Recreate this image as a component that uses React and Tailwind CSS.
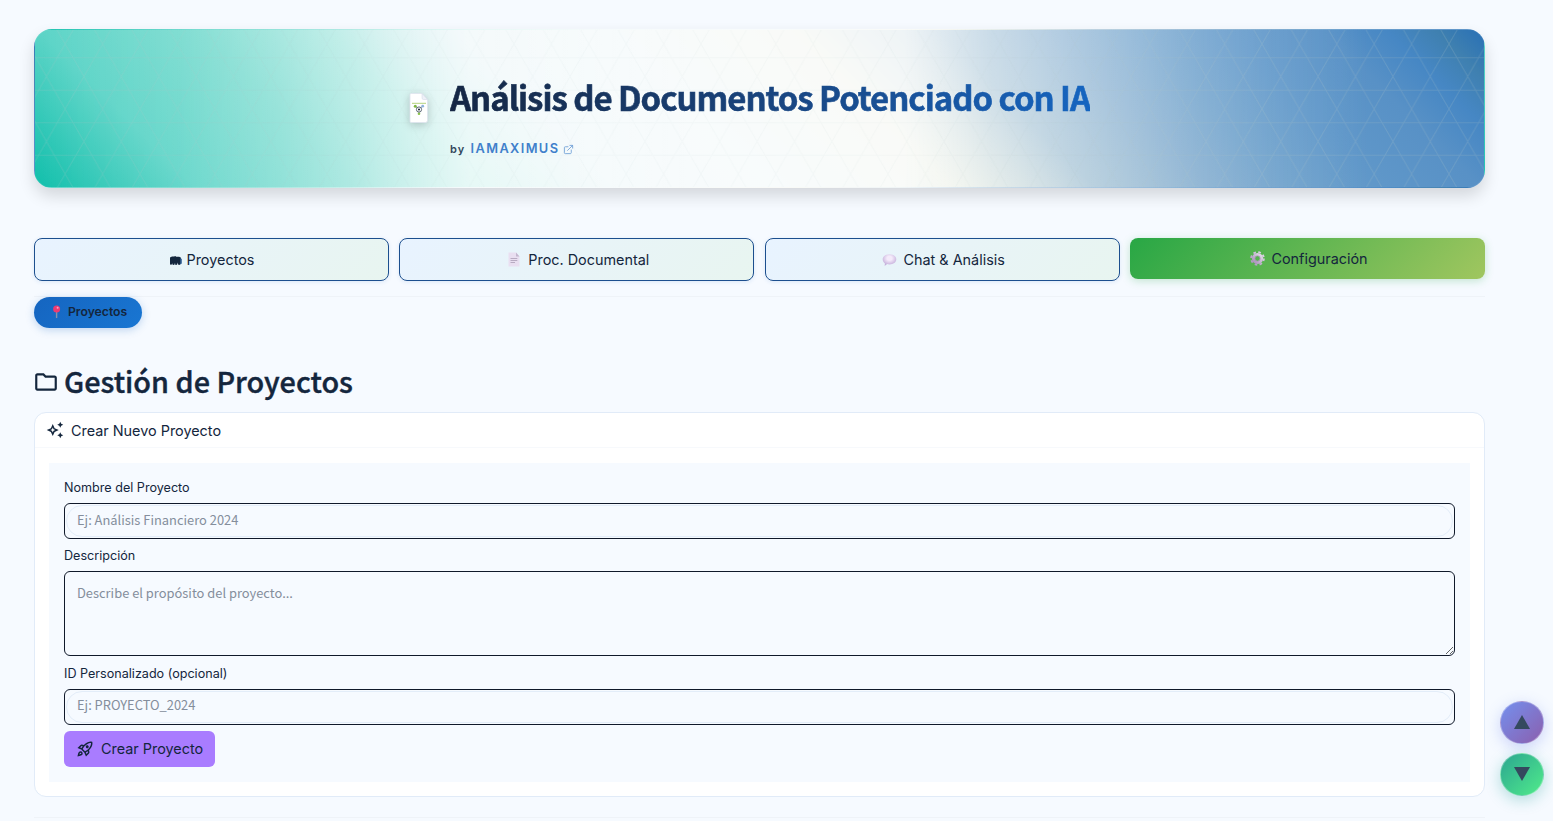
import { MdOutlineAutoAwesome, MdOutlineFolder, MdOutlineRocketLaunch } from "react-icons/md";
import { FiExternalLink } from "react-icons/fi";

const displayFont = "font-['Noto_Sans_CJK_SC',sans-serif]";

function BoxIcon() {
  return (
    <svg width="13" height="14" viewBox="0 0 13 14" className="-mr-px">
      <path d="M1 4.5L3 3.6h2.2l1-.6 1 .8h3l1.8 1v5.6L10.5 12 9 11.6V9.5L8 11.8l-1.6.1-.4-2-.8 2.1-1.6-.3-.4-1.4-.6 1.5L1 11.4z" fill="#14263d" />
      <path d="M11.2 5l1.6.9v4.5l-1.6 1.1z" fill="#2e5d94" />
    </svg>
  );
}

function PageIcon() {
  return (
    <svg width="12" height="15" viewBox="0 0 12 15" className="ml-[4px] mr-[2px]">
      <path d="M.5.5H8l3.5 4v10H.5z" fill="#e9dff1" />
      <path d="M8 .5l3.5 4H8z" fill="#c4b7cf" />
      <path d="M2.5 6.5h6.8M2.5 8.5h6.8M2.5 10.5h4.5" stroke="#b8abc2" />
    </svg>
  );
}

function ChatIcon() {
  return (
    <svg width="15" height="14" viewBox="0 0 15 14" className="ml-[3px]">
      <defs>
        <radialGradient id="bubble" cx="50%" cy="35%" r="60%">
          <stop offset="0.3" stopColor="#f4eafa" />
          <stop offset="1" stopColor="#c4aeda" />
        </radialGradient>
      </defs>
      <path d="M7.5 1.2c3.9 0 6.8 2.2 6.8 5s-3 5.2-6.8 5.2c-.8 0-1.8-.1-2.5-.3-.5.9-1.4 1.5-2.5 1.7.4-.8.5-1.7.3-2.6C1.5 9.2.7 7.9.7 6.2c0-2.800 2.900-5 6.800-5z" fill="url(#bubble)" />
    </svg>
  );
}

function GearIcon() {
  return (
    <svg width="15" height="15" viewBox="0 0 15 15" className="ml-[3px]">
      <defs>
        <linearGradient id="gear" x1="0" y1="1" x2="1" y2="0">
          <stop offset="0" stopColor="#a98fbb" />
          <stop offset="1" stopColor="#e3dcea" />
        </linearGradient>
      </defs>
      <circle cx="7.5" cy="7.5" r="6.4" fill="none" stroke="url(#gear)" strokeWidth="1.8" strokeDasharray="2.6 2.43" />
      <circle cx="7.5" cy="7.5" r="4" fill="none" stroke="url(#gear)" strokeWidth="3.2" />
      <circle cx="7.5" cy="7.5" r="2.7" fill="none" stroke="#9c8fa8" strokeWidth=".6" />
    </svg>
  );
}

function PinIcon() {
  return (
    <svg width="9" height="14" viewBox="0 0 9 14">
      <path d="M3.9 6h1.4v6.2l-.7 1-.7-1z" fill="#8a8fa8" />
      <circle cx="4.6" cy="4" r="3.5" fill="#ee3a72" />
      <circle cx="5.6" cy="2.8" r="1" fill="#ff9dbb" />
    </svg>
  );
}

function LogoIcon() {
  return (
    <svg width="20" height="30" viewBox="0 0 20 30" className="drop-shadow-[0_2px_4px_rgba(0,0,0,0.2)]">
      <path d="M2.500.5H13l5.500 6v21a2 2 0 0 1-2 2h-14a1.500 1.500 0 0 1-1.500-2v-25a1.500 1.500 0 0 1 1.500-2z" fill="#fff" stroke="#dde3ee" strokeWidth=".8" />
      <path d="M13 .5v4.5q0 1.500 1.500 1.500h4z" fill="#eef1f8" stroke="#cfd6e4" strokeWidth=".5" />
      <path d="M3 10.300h14" stroke="#b4d27c" />
      <path d="M6.500 13.500l3.500 3 3.500-3M10 17v4" stroke="#8b98a8" strokeWidth=".7" fill="none" />
      <circle cx="6.3" cy="13.2" r="1.5" fill="#7cb342" />
      <circle cx="13.7" cy="13.2" r="1.4" fill="#8fb2dc" />
      <circle cx="10" cy="20.7" r="1.3" fill="#8bc34a" />
      <circle cx="10" cy="16.5" r="2.6" fill="#fff" stroke="#4c5866" strokeWidth=".9" />
      <circle cx="10" cy="16.5" r="1" fill="#111a26" />
    </svg>
  );
}

// lines fade out towards the middle of the banner
function TrianglePattern() {
  return (
    <svg className="pointer-events-none absolute inset-0 h-full w-full [mask-image:linear-gradient(90deg,#000_0%,rgba(0,0,0,0.35)_25%,rgba(0,0,0,0.4)_65%,#000_85%)]">
      <defs>
        <pattern id="triangles" x="30.2" y="14" width="37.4" height="65" patternUnits="userSpaceOnUse">
          <path d="M0 0L37.4 65M37.4 0L0 65M0 13.8h37.4M0 46.3h37.4" stroke="#b4c8c8" strokeOpacity="0.2" strokeWidth="1" fill="none" />
        </pattern>
      </defs>
      <rect width="100%" height="100%" fill="url(#triangles)" />
    </svg>
  );
}

const tabs = [
  { label: "Proyectos", icon: BoxIcon },
  { label: "Proc. Documental", icon: PageIcon },
  { label: "Chat & Análisis", icon: ChatIcon },
  { label: "Configuración", icon: GearIcon, active: true },
];

function Banner() {
  return (
    <header className="relative h-[159px] overflow-hidden rounded-[18px] border border-white/5 bg-[linear-gradient(90deg,rgba(255,255,255,0)_0%,rgba(255,255,255,0.1)_10%,rgba(255,255,255,0.26)_17%,rgba(255,255,255,0.42)_22%,rgba(255,255,255,0.6)_26%,rgba(255,255,255,0.77)_30%,rgba(255,255,255,0.82)_45%,rgba(255,255,255,0.82)_60%,rgba(255,255,255,0.56)_66%,rgba(255,255,255,0.33)_75%,rgba(255,255,255,0.2)_80%,rgba(255,255,255,0.1)_85%,rgba(255,255,255,0)_92%),linear-gradient(45deg,#10bfab_0%,#5cd4c7_10%,#76dace_20%,#98e3da_28%,#d0e9ef_36%,#d8ecee_46%,#dde5d5_57%,#8fb4cb_66%,#79a6cb_73%,#6b9fca_78%,#5f97c9_84%,#5891c6_90%,#4687c4_94%,#3f80b0_97%,#2870b6_100%)] shadow-[0_8px_16px_rgba(0,0,0,0.14)]">
      <TrianglePattern />
      <div className="relative flex pl-[374px] pt-[44px]">
        <div className="pt-[19px]">
          <LogoIcon />
        </div>
        <div className="ml-[21px]">
          <h1 className={`${displayFont} w-fit whitespace-nowrap bg-linear-to-r from-[#152744] to-[#1565c0] bg-clip-text text-[33px] font-bold leading-[46px] tracking-[-1.03px] text-transparent [-webkit-text-stroke:0.6px_transparent]`}>
            Análisis de Documentos Potenciado con IA
          </h1>
          <div className="mt-[20px] flex items-center text-[11px] font-semibold leading-4 tracking-[1.2px] text-[#33475b]">
            by
            <a className="ml-[5px] flex items-center pt-px text-[12.8px] font-semibold tracking-[1.4px] text-[#3f80cb]">
              IAMAXIMUS
              <FiExternalLink className="ml-1 size-[11px] opacity-70" />
            </a>
          </div>
        </div>
      </div>
    </header>
  );
}

function Tab({ label, icon: Icon, active }) {
  if (active) {
    return (
      <button className="flex h-[41px] items-center justify-center gap-1.5 rounded-lg bg-[linear-gradient(135deg,#28a745,#a0c65f)] text-[14.4px] shadow-[0_2px_8px_rgba(40,167,69,0.25)]">
        <Icon />
        {label}
      </button>
    );
  }
  return (
    <button className="flex h-[43px] items-center justify-center gap-1.5 rounded-lg border border-[#1c4f8e] bg-[linear-gradient(135deg,#e8f3ff,#e8f5f0)] text-[14.4px] shadow-[0_1px_4px_rgba(21,101,192,0.12)]">
      <Icon />
      {label}
    </button>
  );
}

function Field({ label, placeholder, multiline }) {
  return (
    <label className="block text-[12.6px] leading-[18px]">
      {label}
      {multiline ? (
        <textarea
          placeholder={placeholder}
          className={`${displayFont} mt-[6px] block h-[85px] w-full rounded-md border border-[#10192a] bg-[#f6faff] px-3 py-[11px] text-[12.9px] leading-[20px] placeholder:text-[#848e9c]`}
        />
      ) : (
        <span className="mt-[6px] block h-9 rounded-md border border-[#10192a] bg-[#f6faff] p-px">
          <input
            placeholder={placeholder}
            className={`${displayFont} block h-8 w-full rounded-2xl border border-[#e3edf9] px-[10px] pb-[4px] text-[12.9px] placeholder:text-[#848e9c]`}
          />
        </span>
      )}
    </label>
  );
}

function ProjectForm() {
  return (
    <section className="h-[385px] rounded-xl border border-[#e1ebf8] bg-white">
      <div className="flex h-[35px] items-center border-b border-[#f7f9fc] pl-[11px] pt-px text-[14.4px]">
        <MdOutlineAutoAwesome className="-mt-px mr-[7px] size-[18px]" />
        Crear Nuevo Proyecto
      </div>
      <div className="mx-[14px] mt-[15px] h-[319px] bg-[#f6faff] px-[15px] pt-4">
        <div className="space-y-[8.3px]">
          <Field label="Nombre del Proyecto" placeholder="Ej: Análisis Financiero 2024" />
          <Field label="Descripción" placeholder="Describe el propósito del proyecto..." multiline />
          <Field label="ID Personalizado (opcional)" placeholder="Ej: PROYECTO_2024" />
        </div>
        <button className="mt-[6px] flex h-9 w-[151px] items-center rounded-md bg-[#a97cff] pl-[12px] pt-px text-[14.4px]">
          <MdOutlineRocketLaunch className="-mt-px mr-[7px] size-[18px]" />
          Crear Proyecto
        </button>
      </div>
    </section>
  );
}

function ScrollButtons() {
  return (
    <div className="fixed bottom-[25px] right-[9px] flex flex-col gap-[9px]">
      <button className="flex h-[43px] w-11 items-center justify-center rounded-full border border-white/30 bg-[linear-gradient(135deg,#7490ee,#8b5fae)] shadow-[0_4px_15px_rgba(102,126,234,0.3)]">
        <svg width="16" height="14" viewBox="0 0 16 14" className="-mt-px">
          <path d="M8 0l8 14H0z" fill="#34495e" />
        </svg>
      </button>
      <button className="flex h-[43px] w-11 items-center justify-center rounded-full border border-white/30 bg-[linear-gradient(135deg,#2ba690,#50eb8b)] shadow-[0_4px_15px_rgba(17,153,142,0.3)]">
        <svg width="16" height="14" viewBox="0 0 16 14" className="-mt-px">
          <path d="M8 14L0 0h16z" fill="#34495e" />
        </svg>
      </button>
    </div>
  );
}

export default function App() {
  return (
    <div className="h-[821px] overflow-hidden bg-[#f6faff] pl-[34px] pr-[68px] pt-[29px] font-['Inter',sans-serif] text-[#14263d]">
      <Banner />
      <nav className="mt-[50px] grid h-[59px] grid-cols-4 items-start gap-[10.4px] border-b border-[#eff3f8]">
        {tabs.map((tab) => (
          <Tab key={tab.label} {...tab} />
        ))}
      </nav>
      <div className="flex h-[31px] w-[108px] items-center rounded-full bg-[linear-gradient(135deg,#1565c0,#1976d2)] pb-px pl-[18px] text-[12.2px] font-semibold shadow-[0_2px_8px_rgba(21,101,192,0.25)]">
        <PinIcon />
        <span className="ml-[7px]">Proyectos</span>
      </div>
      <h2 className={`${displayFont} mt-[32px] flex h-[52px] items-center whitespace-nowrap pb-[10px] text-[28.8px] font-medium leading-[44px] [-webkit-text-stroke:0.4px_#14263d]`}>
        <MdOutlineFolder className="mr-[5px] mt-[2px] size-[26px] -ml-[1px]" />
        Gestión de Proyectos
      </h2>
      <ProjectForm />
      <div className="mt-5 border-t border-[#eff3f8]" />
      <ScrollButtons />
    </div>
  );
}
